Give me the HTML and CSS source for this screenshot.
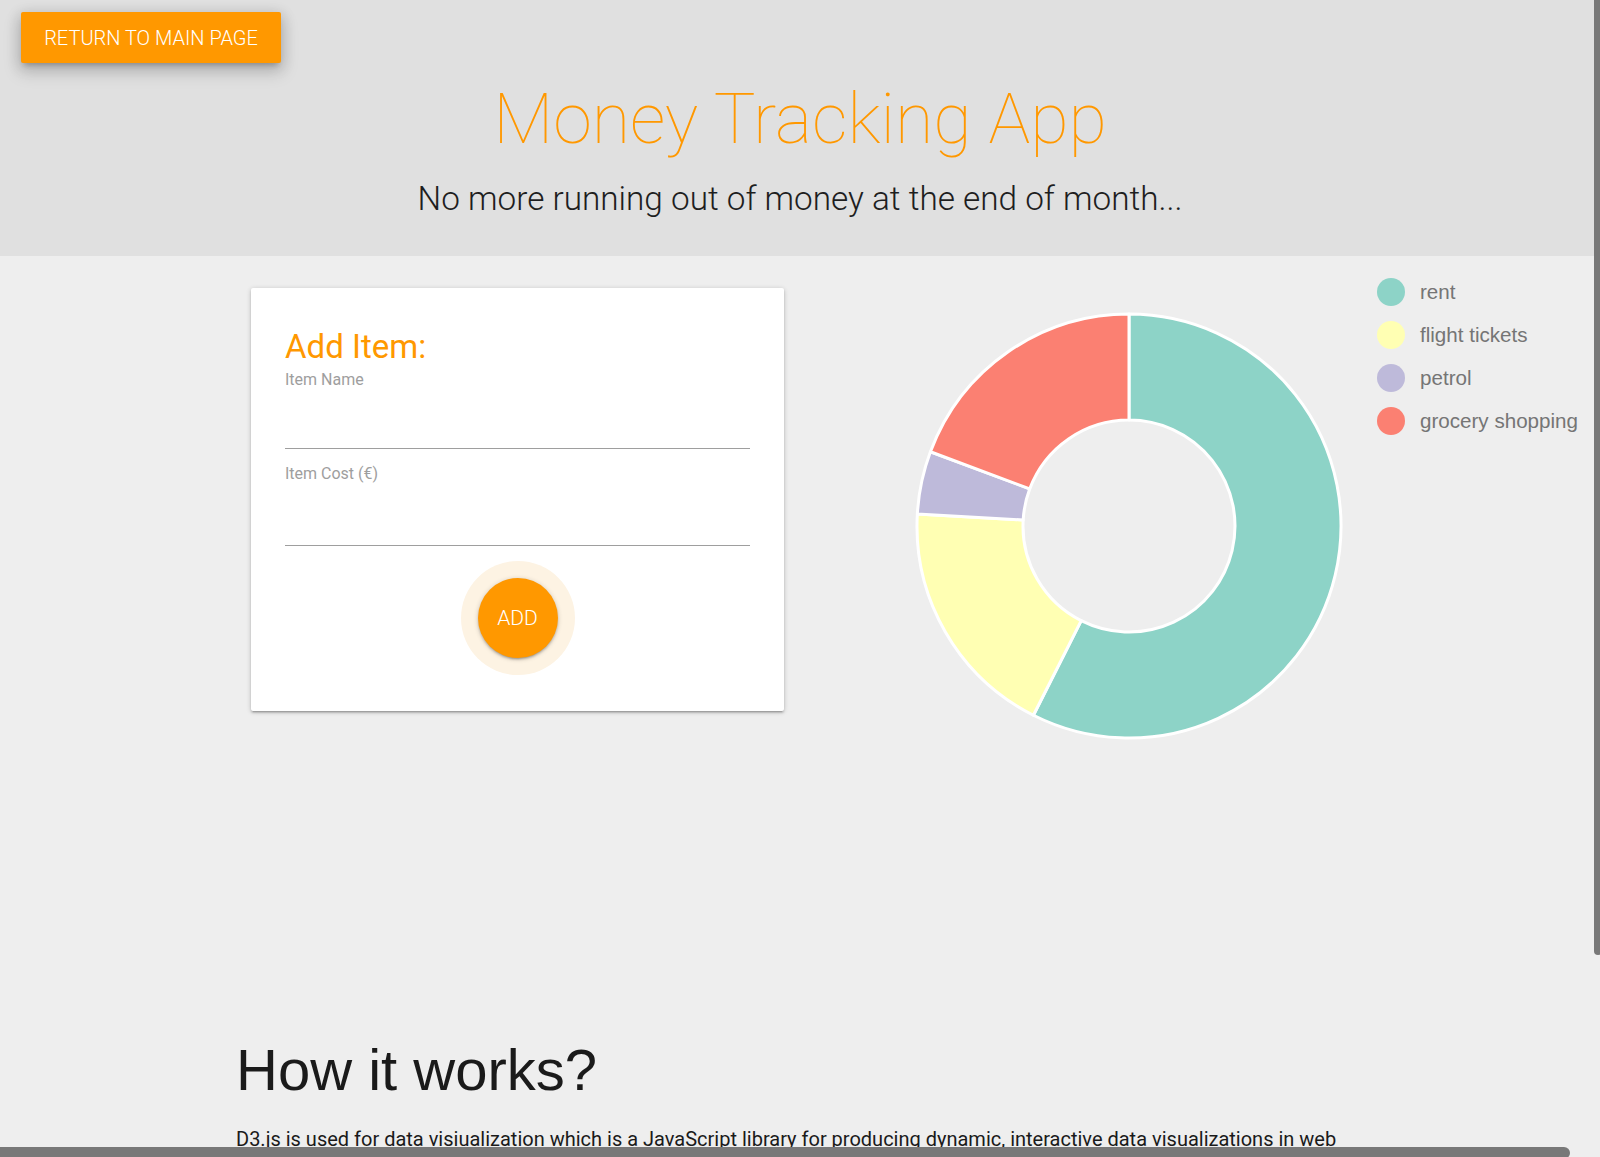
FILE: index.html
```html
<!DOCTYPE html>
<html lang="en">
<head>
<meta charset="utf-8">
<title>Money Tracking App</title>
<link rel="stylesheet" href="styles.css">
</head>
<body>
<header class="hero">
  <a class="btn-return" href="#">RETURN TO MAIN PAGE</a>
  <h1 class="hero-title">Money Tracking App</h1>
  <p class="hero-sub">No more running out of money at the end of month...</p>
</header>

<main class="charts">
  <section class="card">
    <h4 class="card-title">Add Item:</h4>
    <label class="field-label">Item Name</label>
    <div class="field-input"></div>
    <label class="field-label field-label-2">Item Cost (€)</label>
    <div class="field-input field-input-2"></div>
    <div class="add-wrap">
      <div class="add-halo"><button class="add-btn">ADD</button></div>
    </div>
  </section>

  <svg class="donut" width="440" height="440" viewBox="0 0 440 440">
    <g stroke="#ffffff" stroke-width="3" stroke-linejoin="round">
      <path fill="#8dd3c7" d="M220,8 A212,212 0 1 1 124.41,409.23 L172.20,314.62 A106,106 0 1 0 220,114 Z"/>
      <path fill="#ffffb3" d="M124.41,409.23 A212,212 0 0 1 8.34,207.98 L114.17,213.99 A106,106 0 0 0 172.20,314.62 Z"/>
      <path fill="#bebada" d="M8.34,207.98 A212,212 0 0 1 21.43,145.76 L120.71,182.88 A106,106 0 0 0 114.17,213.99 Z"/>
      <path fill="#fb8072" d="M21.43,145.76 A212,212 0 0 1 220,8 L220,114 A106,106 0 0 0 120.71,182.88 Z"/>
    </g>
  </svg>

  <ul class="legend">
    <li class="legend-item"><span class="dot dot-rent"></span>rent</li>
    <li class="legend-item"><span class="dot dot-flight"></span>flight tickets</li>
    <li class="legend-item"><span class="dot dot-petrol"></span>petrol</li>
    <li class="legend-item"><span class="dot dot-grocery"></span>grocery shopping</li>
  </ul>
</main>

<section class="about">
  <h2 class="about-title">How it works?</h2>
  <p class="about-text">D3.js is used for data visiualization which is a JavaScript library for producing dynamic, interactive data visualizations in web browsers. It makes use of the widely implemented SVG, HTML5, and CSS standards.</p>
</section>

<div class="scroll-v"></div>
<div class="scroll-h"></div>
</body>
</html>
```

FILE: styles.css
```css
html, body {
  margin: 0;
  padding: 0;
  overflow: hidden;
  height: 1157px;
}

body {
  background: #eeeeee;
  font-family: Roboto, "Liberation Sans", sans-serif;
  color: #222222;
}

/* Header */
.hero {
  background: #e0e0e0;
  height: 256px;
  box-sizing: border-box;
  padding-top: 12px;
  display: flex;
  flex-direction: column;
  align-items: center;
}

.btn-return {
  align-self: flex-start;
  margin-left: 21px;
  width: 260px;
  height: 51px;
  box-sizing: border-box;
  background: #ff9800;
  color: #ffffff;
  text-decoration: none;
  font-weight: 300;
  font-size: 20px;
  display: flex;
  align-items: center;
  justify-content: center;
  border-radius: 2px;
  box-shadow: 0 8px 17px 2px rgba(0,0,0,0.14), 0 3px 14px 2px rgba(0,0,0,0.12), 0 5px 5px -3px rgba(0,0,0,0.2);
}

.hero-title {
  margin: 17px 0 0;
  font-size: 70px;
  line-height: 78px;
  font-weight: 100;
  color: #ff9800;
}

.hero-sub {
  margin: 19px 0 0;
  font-size: 33.3px;
  line-height: 44px;
  font-weight: 300;
  color: #1e1e1e;
}

/* Chart row */
.charts {
  display: flex;
  align-items: flex-start;
  height: 781px;
  padding-left: 251px;
  box-sizing: border-box;
}

.card {
  margin-top: 32px;
  width: 533px;
  height: 423px;
  box-sizing: border-box;
  background: #ffffff;
  padding: 38px 34px 0;
  border-radius: 2px;
  box-shadow: 0 2px 2px 0 rgba(0,0,0,0.14), 0 3px 1px -2px rgba(0,0,0,0.12), 0 1px 5px 0 rgba(0,0,0,0.2);
  display: flex;
  flex-direction: column;
}

.card-title {
  margin: 0;
  font-size: 33px;
  line-height: 42px;
  font-weight: 400;
  color: #ff9800;
}

.field-label {
  margin-top: 2px;
  font-size: 16px;
  line-height: 20px;
  color: #9e9e9e;
}

.field-label-2 {
  margin-top: 15px;
}

.field-input {
  height: 58px;
  border-bottom: 1px solid #9e9e9e;
}

.field-input-2 {
  height: 61px;
}

.add-wrap {
  margin-top: 15px;
  display: flex;
  justify-content: center;
}

.add-halo {
  width: 114px;
  height: 114px;
  border-radius: 50%;
  background: #fdf3e3;
  display: flex;
  align-items: center;
  justify-content: center;
}

.add-btn {
  width: 80px;
  height: 80px;
  border: none;
  border-radius: 50%;
  background: #ff9800;
  color: #ffffff;
  font-family: Roboto, "Liberation Sans", sans-serif;
  font-weight: 300;
  font-size: 21px;
  padding: 0;
  box-shadow: 0 2px 2px 0 rgba(0,0,0,0.14), 0 3px 1px -2px rgba(0,0,0,0.12), 0 1px 5px 0 rgba(0,0,0,0.2);
}

.donut {
  margin-top: 50px;
  margin-left: 124.5px;
  flex: none;
}

.legend {
  list-style: none;
  margin: 22px 0 0 28.5px;
  padding: 0;
  font-family: "Liberation Sans", Arial, sans-serif;
  font-size: 20.6px;
  color: #757575;
}

.legend-item {
  display: flex;
  align-items: center;
  height: 28px;
  margin-bottom: 15px;
  white-space: nowrap;
}

.dot {
  width: 28px;
  height: 28px;
  border-radius: 50%;
  margin-right: 15px;
  flex: none;
}

.dot-rent { background: #8dd3c7; }
.dot-flight { background: #ffffb3; }
.dot-petrol { background: #bebada; }
.dot-grocery { background: #fb8072; }

/* About */
.about {
  width: 1128px;
  margin: 0 auto;
}

.about-title {
  margin: 0;
  font-family: "Liberation Sans", Arial, sans-serif;
  font-weight: 400;
  font-size: 58px;
  line-height: 65px;
  color: #1a1a1a;
}

.about-text {
  margin: 22px 0 0;
  font-size: 20px;
  line-height: 30px;
  color: #1a1a1a;
}

/* Overlay scrollbars (macOS style) */
.scroll-v {
  position: fixed;
  top: -4px;
  right: -2px;
  width: 8px;
  height: 959px;
  border-radius: 4px;
  background: #787878;
}

.scroll-h {
  position: fixed;
  left: -10px;
  bottom: -2px;
  width: 1580px;
  height: 12px;
  border-radius: 6px;
  background: #787878;
}
```
